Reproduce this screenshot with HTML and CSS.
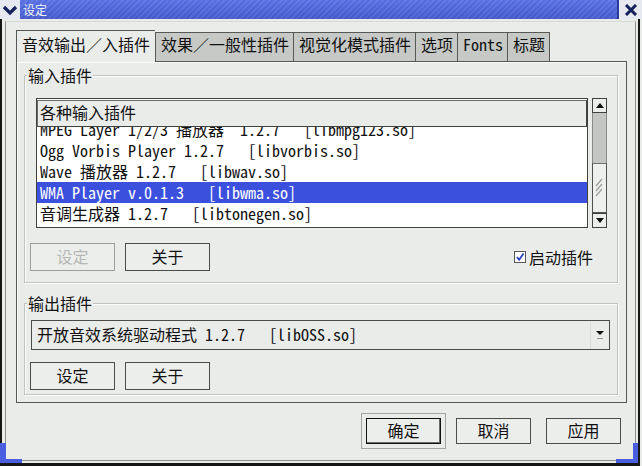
FILE: index.html
```html
<!DOCTYPE html>
<html>
<head>
<meta charset="utf-8">
<title>设定</title>
<link rel="stylesheet" href="styles.css">
</head>
<body>
<div class="win">
  <div class="titlebar">
    <div class="tb-menu">
      <svg width="16" height="12" viewBox="0 0 16 12"><path d="M2 3 L8 9 L14 3" fill="none" stroke="#16205a" stroke-width="3.2" stroke-linejoin="miter"/></svg>
    </div>
    <div class="tb-title">设定</div>
    <div class="tb-close">
      <svg width="14" height="12" viewBox="0 0 14 12"><path d="M2 1 L12 11 M12 1 L2 11" fill="none" stroke="#16205a" stroke-width="3"/></svg>
    </div>
  </div>
  <div class="frame">
    <div class="inner">
      <div class="notebook">
        <div class="tabs">
          <div class="tab active">音效输出／入插件</div>
          <div class="tab">效果／一般性插件</div>
          <div class="tab">视觉化模式插件</div>
          <div class="tab">选项</div>
          <div class="tab">Fonts</div>
          <div class="tab last">标题</div>
        </div>
        <div class="panel">
          <fieldset class="group group-in">
            <legend>输入插件</legend>
            <div class="listbox">
              <div class="tree">
                <div class="thead">各种输入插件</div>
                <div class="viewport">
                  <div class="rows">
                    <div class="row">MPEG Layer 1/2/3 播放器  1.2.7   [libmpg123.so]</div>
                    <div class="row">Ogg Vorbis Player 1.2.7   [libvorbis.so]</div>
                    <div class="row">Wave 播放器 1.2.7   [libwav.so]</div>
                    <div class="row selected">WMA Player v.0.1.3   [libwma.so]</div>
                    <div class="row">音调生成器 1.2.7   [libtonegen.so]</div>
                  </div>
                </div>
              </div>
              <div class="vscroll">
                <div class="sb-btn">
                  <svg width="8" height="5" viewBox="0 0 8 5"><path d="M0 5 L4 0 L8 5 Z" fill="#111"/></svg>
                </div>
                <div class="sb-trough"></div>
                <div class="sb-slider">
                  <svg width="13" height="20" viewBox="0 0 13 20"><path d="M3 8 L9 1 M3 13 L9 6 M3 18 L9 11" stroke="#9a9c9a" stroke-width="1.2" fill="none"/></svg>
                </div>
                <div class="sb-btn">
                  <svg width="8" height="5" viewBox="0 0 8 5"><path d="M0 0 L8 0 L4 5 Z" fill="#111"/></svg>
                </div>
              </div>
            </div>
            <div class="btnrow">
              <div class="btn disabled">设定</div>
              <div class="btn">关于</div>
              <div class="check">
                <span class="box"><svg width="10" height="10" viewBox="0 0 10 10"><path d="M2 5 L4.2 7.8 L8.5 1.5" fill="none" stroke="#2a3fc0" stroke-width="1.8"/></svg></span>
                <span>启动插件</span>
              </div>
            </div>
          </fieldset>
          <fieldset class="group group-out">
            <legend>输出插件</legend>
            <div class="combo">
              <div class="combo-text">开放音效系统驱动程式 1.2.7   [libOSS.so]</div>
              <div class="combo-btn">
                <svg width="8" height="9" viewBox="0 0 8 9"><path d="M0 0 L8 0 L4 4 Z" fill="#111"/><path d="M1 7.5 L7 7.5" stroke="#9a9c9a" stroke-width="1"/></svg>
              </div>
            </div>
            <div class="btnrow">
              <div class="btn">设定</div>
              <div class="btn">关于</div>
            </div>
          </fieldset>
        </div>
      </div>
      <div class="actions">
        <div class="default-ring"><div class="btn act default">确定</div></div>
        <div class="btn act">取消</div>
        <div class="btn act">应用</div>
      </div>
    </div>
  </div>
  <div class="grip grip-left"></div>
  <div class="grip grip-right"></div>
</div>
</body>
</html>
```

FILE: styles.css
```css
html, body {
  margin: 0;
  padding: 0;
  background: #eaecea;
}

body {
  font-family: "Noto Sans Mono CJK SC", "Noto Sans CJK SC", "Liberation Mono", monospace;
  font-size: 16px;
  color: #111;
}

.win {
  position: relative;
  width: 642px;
  height: 466px;
  display: flex;
  flex-direction: column;
  overflow: hidden;
  background: #eaecea;
}

/* ---------- title bar ---------- */
.titlebar {
  height: 19px;
  display: flex;
  flex: none;
}

.tb-menu {
  width: 20px;
  background: #e6e9f0;
  display: flex;
  align-items: center;
  justify-content: center;
}

.tb-title {
  flex: 1;
  color: #f2f4ff;
  font-family: "Noto Sans CJK SC", sans-serif;
  font-size: 12px;
  line-height: 19px;
  padding-left: 3px;
  background:
    linear-gradient(to bottom, rgba(255,255,255,0.06), rgba(0,0,40,0.12)),
    repeating-linear-gradient(135deg, #5b73e8 0 2px, #4d65dc 2px 4px);
  border-right: 2px solid #2a3a9e;
}

.tb-close {
  width: 23px;
  background: #e6e9f0;
  display: flex;
  align-items: center;
  justify-content: center;
}

/* ---------- window frame ---------- */
.frame {
  flex: 1;
  display: flex;
  margin-right: 2px;
  border-left: 2px solid #161616;
  border-right: 2px solid #161616;
  border-bottom: 3px solid #161616;
}

.inner {
  flex: 1;
  display: flex;
  flex-direction: column;
  margin: 2px 2px 2px 3px;
  border: 1px solid #8e908e;
  border-top-color: #d8dad8;
}

/* resize grips in the bottom corners */
.grip {
  position: absolute;
  bottom: 3px;
  width: 22px;
  height: 20px;
  box-sizing: border-box;
  border-bottom: 4px solid #4a5fe0;
}

.grip-left {
  left: 0;
  border-left: 6px solid #4a5fe0;
}

.grip-right {
  right: 4px;
  border-right: 5px solid #4a5fe0;
}

/* ---------- notebook ---------- */
.notebook {
  margin: 8px 8px 0 10px;
}

.tabs {
  height: 31px;
  display: flex;
  align-items: flex-end;
}

.tab {
  box-sizing: border-box;
  height: 29px;
  padding: 0 4px 0 5px;
  border-top: 1px solid #555855;
  border-left: 1px solid #555855;
  background: #c6c9c6;
  line-height: 23px;
  white-space: nowrap;
}

.tab.last {
  border-right: 1px solid #555855;
}

.tab.active {
  height: 32px;
  padding: 2px 5px 0 5px;
  margin-bottom: -1px;
  background: #eaecea;
  position: relative;
  z-index: 1;
}

.panel {
  border: 1px solid #555855;
  padding: 3px 8px 7px 7px;
  box-shadow: inset 1px 1px 0 #fbfbfb;
}

/* ---------- frames ---------- */
.group {
  margin: 0;
  padding: 0;
  border: 1px solid #c0c3c0;
  box-shadow: inset 1px 1px 0 #fcfcfc, 1px 1px 0 #fcfcfc;
  min-width: 0;
}

.group legend {
  margin-left: 2px;
  padding: 0 1px;
  height: 20px;
  line-height: 20px;
}

.group-in {
  padding-bottom: 11px;
}

.group-out {
  margin-top: 10px;
  padding-bottom: 4px;
}

/* ---------- list ---------- */
.listbox {
  margin: 13px 10px 0 11px;
  height: 130px;
  display: flex;
  gap: 4px;
}

.tree {
  flex: 1;
  box-sizing: border-box;
  border: 1px solid #404240;
  background: #fff;
  display: flex;
  flex-direction: column;
}

.thead {
  box-sizing: border-box;
  height: 27px;
  margin-top: 1px;
  border: 1px solid #6a6c6a;
  border-bottom-color: #404240;
  border-right-color: #404240;
  background: #eaecea;
  padding-left: 2px;
  line-height: 23px;
}

.viewport {
  flex: 1;
  overflow: hidden;
}

.rows {
  margin-top: -8px;
}

.row {
  height: 21px;
  line-height: 21px;
  padding-left: 3px;
  white-space: pre;
}

.row.selected {
  background: #3b51dd;
  color: #fff;
}

.vscroll {
  width: 15px;
  display: flex;
  flex-direction: column;
}

.sb-btn {
  box-sizing: border-box;
  height: 15px;
  border: 1px solid #404240;
  background: #eceeec;
  display: flex;
  align-items: center;
  justify-content: center;
}

.sb-trough {
  box-sizing: border-box;
  height: 50px;
  background: #c3c6c3;
  border-left: 1px solid #8a8c8a;
  border-right: 1px solid #8a8c8a;
}

.sb-slider {
  box-sizing: border-box;
  height: 50px;
  background: #eef0ee;
  border: 1px solid #505250;
  border-top-color: #707270;
  display: flex;
  align-items: center;
  justify-content: center;
}

/* ---------- buttons ---------- */
.btnrow {
  display: flex;
  align-items: center;
  gap: 10px;
  margin-top: 15px;
  padding-left: 5px;
}

.group-out .btnrow {
  margin-top: 12px;
}

.btn {
  box-sizing: border-box;
  width: 85px;
  height: 28px;
  border: 1px solid #4a4c4a;
  background: #eceeec;
  display: flex;
  align-items: center;
  justify-content: center;
  line-height: 23px;
  padding-bottom: 2px;
}

.btn.disabled {
  border-color: #9c9e9c;
  color: #b6b8b6;
}

.check {
  margin-left: auto;
  margin-right: 24px;
  display: flex;
  align-items: center;
  gap: 3px;
  line-height: 23px;
}

.check .box {
  box-sizing: border-box;
  width: 12px;
  height: 12px;
  border: 1px solid #555855;
  background: #fff;
  display: flex;
  align-items: center;
  justify-content: center;
}

/* ---------- combo ---------- */
.combo {
  box-sizing: border-box;
  margin: 7px 7px 0 6px;
  height: 30px;
  border: 1px solid #4a4c4a;
  display: flex;
}

.combo-text {
  flex: 1;
  padding-left: 5px;
  line-height: 26px;
  white-space: pre;
}

.combo-btn {
  width: 18px;
  border-left: 1px solid #dcdedc;
  display: flex;
  align-items: center;
  justify-content: center;
}

/* ---------- dialog actions ---------- */
.actions {
  display: flex;
  justify-content: flex-end;
  align-items: center;
  padding: 10px 14px 0 0;
}

.default-ring {
  border: 1px solid #a4a6a4;
  padding: 4px;
  margin-right: 10px;
}

.btn.act {
  width: 75px;
  height: 26px;
  padding-bottom: 1px;
}

.btn.act + .btn.act {
  margin-left: 15px;
}

.btn.default {
  border-color: #111;
  box-shadow: inset -1px -1px 0 #6a6c6a;
}
```
